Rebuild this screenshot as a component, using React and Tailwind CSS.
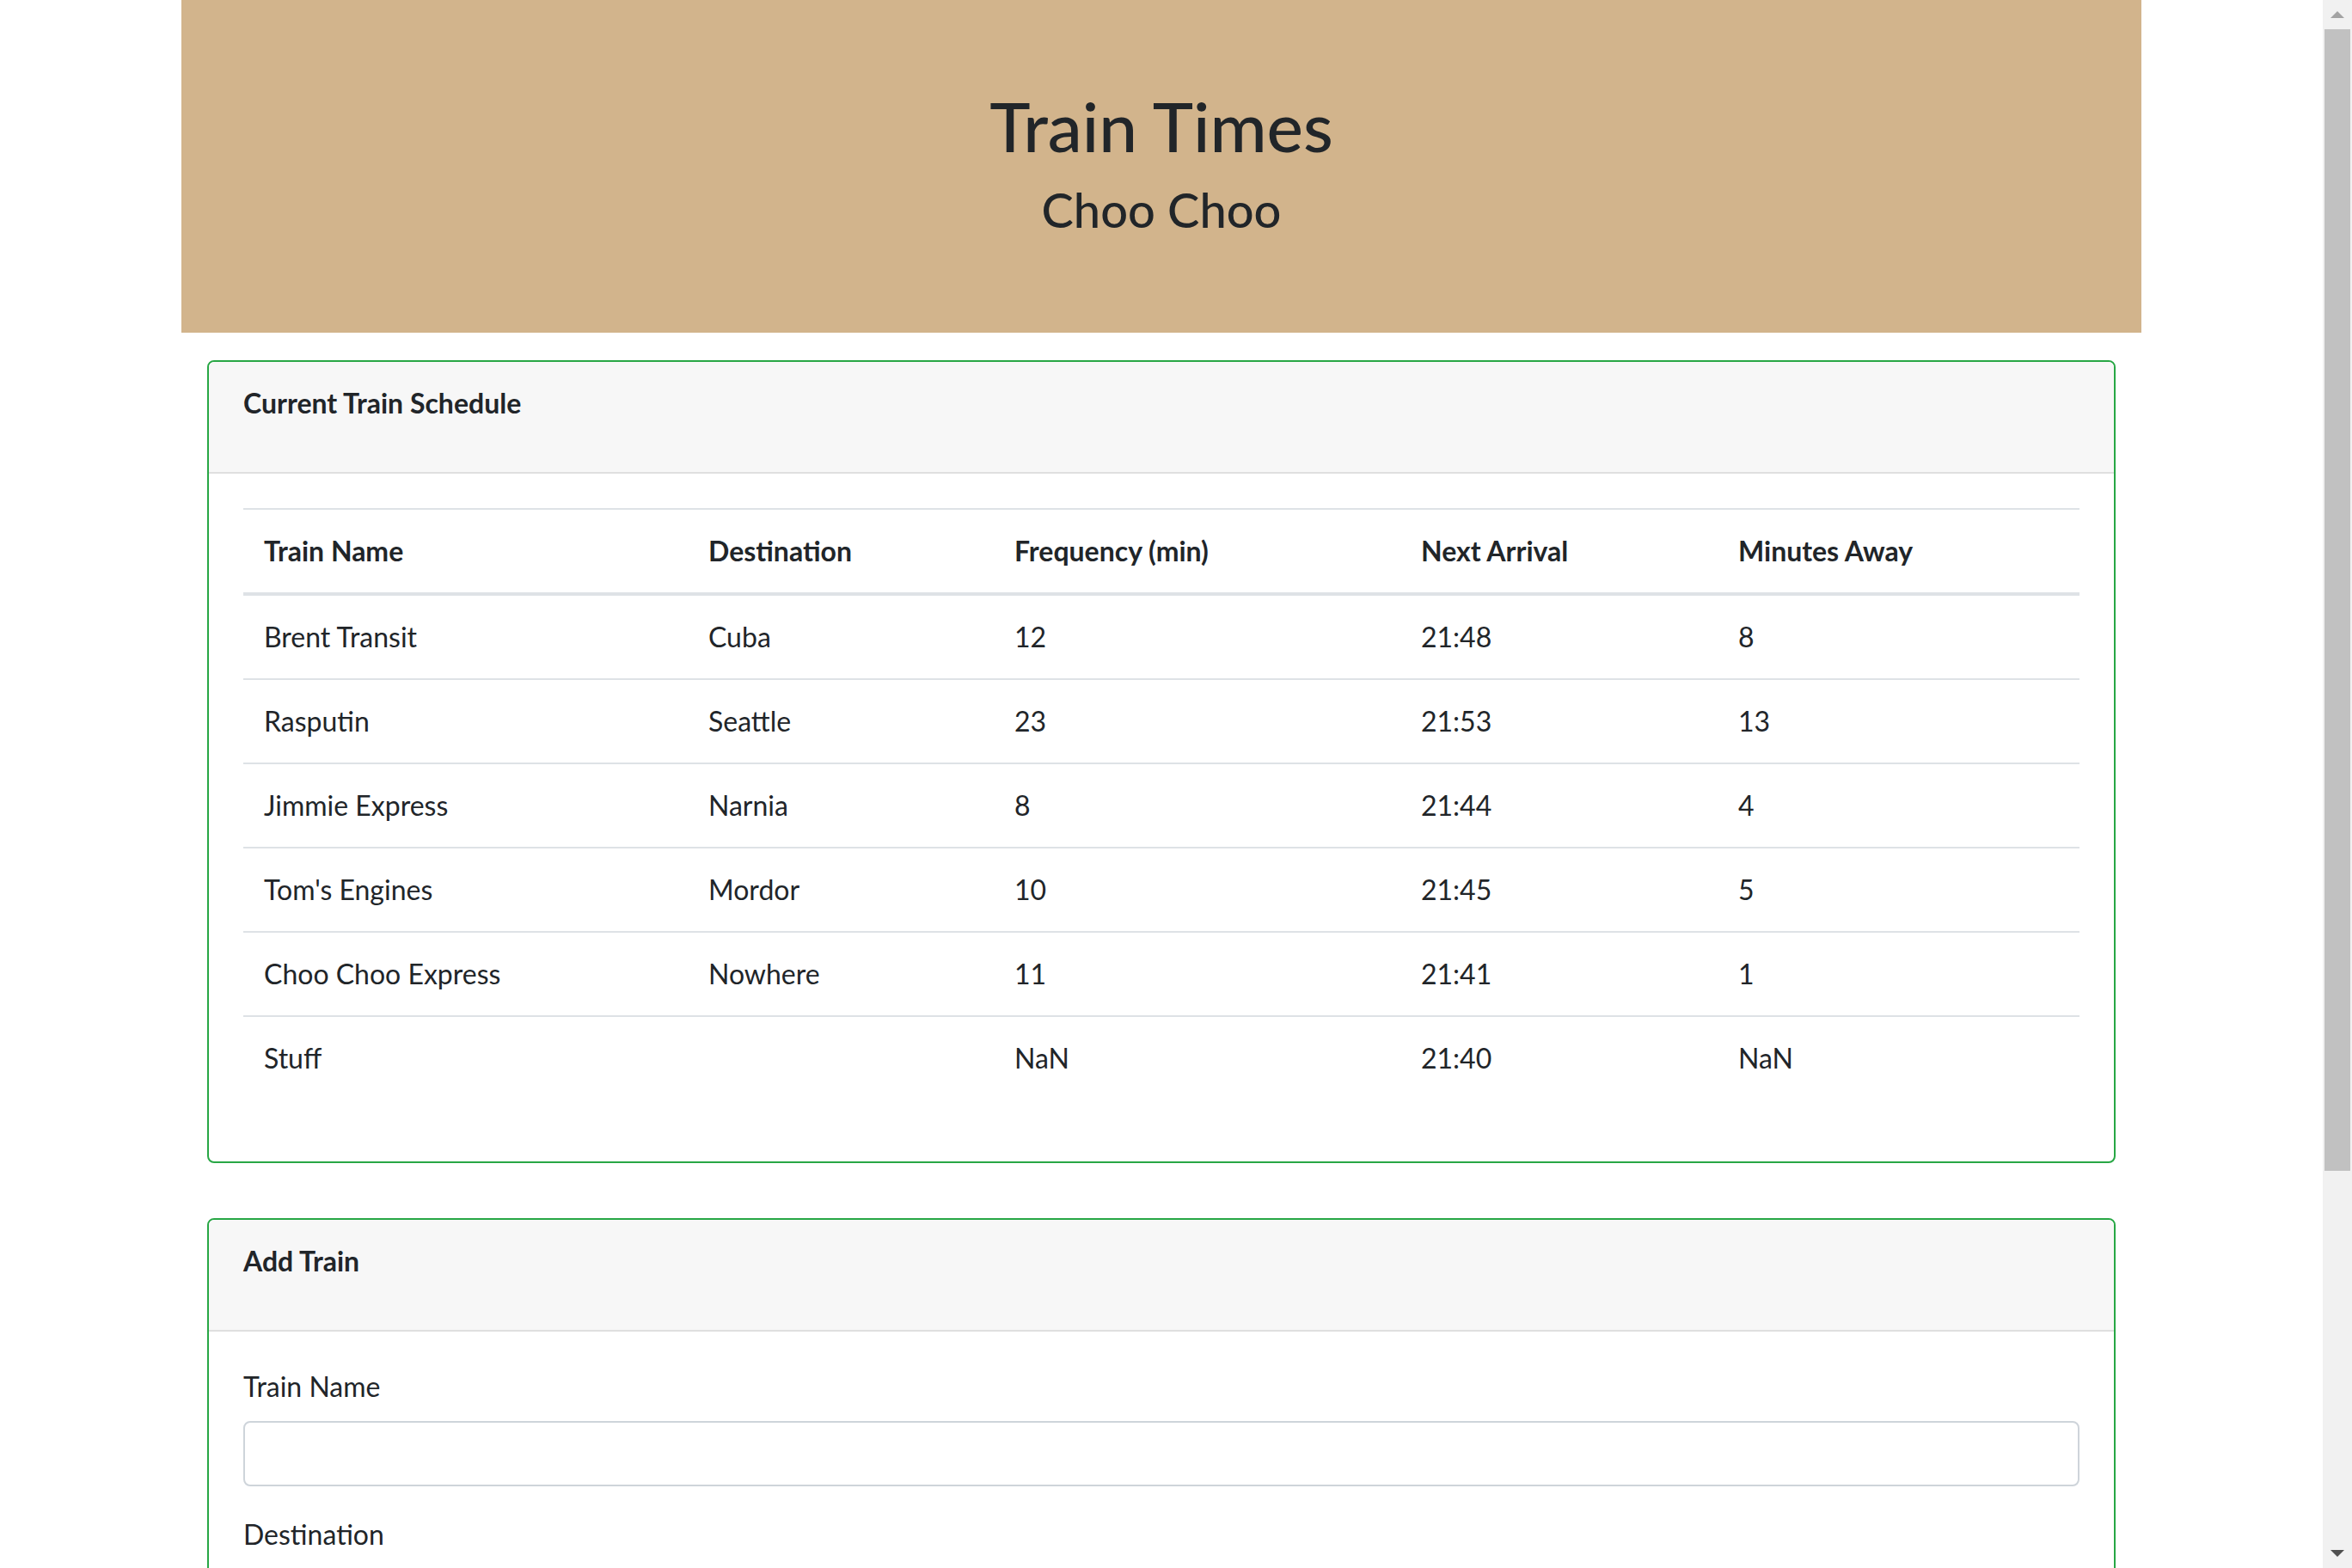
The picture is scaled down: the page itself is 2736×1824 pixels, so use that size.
const trains = [
  ["Brent Transit", "Cuba", "12", "21:48", "8"],
  ["Rasputin", "Seattle", "23", "21:53", "13"],
  ["Jimmie Express", "Narnia", "8", "21:44", "4"],
  ["Tom's Engines", "Mordor", "10", "21:45", "5"],
  ["Choo Choo Express", "Nowhere", "11", "21:41", "1"],
  ["Stuff", "", "NaN", "21:40", "NaN"],
];

const columns = ["Train Name", "Destination", "Frequency (min)", "Next Arrival", "Minutes Away"];

const Card = ({ title, className, children }) => (
  <div className={`rounded-[8px] border-2 border-[#28a745] ${className}`}>
    <div className="rounded-t-[6px] border-b-2 border-[#dfdfdf] bg-[#f7f7f7] px-[40px] pt-[24px] pb-[24px]">
      <p className="mb-[32px] font-bold">{title}</p>
    </div>
    <div className="p-[40px]">{children}</div>
  </div>
);

const Field = ({ label }) => (
  <div className="mb-[32px]">
    <label className="mb-[16px] block">{label}</label>
    <input type="text" className="block h-[76px] w-full rounded-[8px] border-2 border-[#ced4da] bg-white px-[24px] outline-none" />
  </div>
);

const Scrollbar = () => (
  <div className="flex h-full w-[34px] shrink-0 flex-col bg-[#f1f1f1]">
    <div className="flex h-[34px] shrink-0 items-center justify-center">
      <svg width="16" height="8" viewBox="0 0 16 8">
        <polygon points="8,0 16,8 0,8" fill="#a3a3a3" />
      </svg>
    </div>
    <div className="mx-[2px] h-[1328px] shrink-0 bg-[#c1c1c1]" />
    <div className="flex-1" />
    <div className="flex h-[34px] shrink-0 items-center justify-center">
      <svg width="16" height="8" viewBox="0 0 16 8">
        <polygon points="0,0 16,0 8,8" fill="#505050" />
      </svg>
    </div>
  </div>
);

export default function App() {
  return (
    <div className="flex h-screen w-full overflow-hidden bg-white font-['Lato','Liberation_Sans',sans-serif] text-[32px] leading-[48px] text-[#212529]">
      <div className="min-w-0 flex-1 overflow-hidden">
        <div className="mx-auto w-[2280px]">
          {/* Jumbotron */}
          <header className="bg-[#d2b48c] pt-[98px] pb-[94px] text-center">
            <h1 className="mb-[16px] text-[80px] leading-[96px] font-medium">Train Times</h1>
            <h3 className="mb-[16px] text-[56px] leading-[67px] font-medium">Choo Choo</h3>
          </header>

          <div className="px-[30px]">
            {/* Schedule */}
            <Card title="Current Train Schedule" className="mt-[32px]">
              <table className="mb-[32px] w-full table-fixed border-collapse text-left">
                <colgroup>
                  <col className="w-[517px]" />
                  <col className="w-[356px]" />
                  <col className="w-[473px]" />
                  <col className="w-[369px]" />
                  <col className="w-[421px]" />
                </colgroup>
                <thead>
                  <tr>
                    {columns.map((c) => (
                      <th key={c} className="border-t-2 border-b-4 border-[#dee2e6] p-[24px] font-bold">
                        {c}
                      </th>
                    ))}
                  </tr>
                </thead>
                <tbody>
                  {trains.map((row, i) => (
                    <tr key={i}>
                      {row.map((cell, j) => (
                        <td key={j} className="border-t-2 border-[#dee2e6] p-[24px]">
                          {cell}
                        </td>
                      ))}
                    </tr>
                  ))}
                </tbody>
              </table>
            </Card>

            {/* Add train form */}
            <Card title="Add Train" className="mt-[64px]">
              <Field label="Train Name" />
              <Field label="Destination" />
            </Card>
          </div>
        </div>
      </div>
      <Scrollbar />
    </div>
  );
}
